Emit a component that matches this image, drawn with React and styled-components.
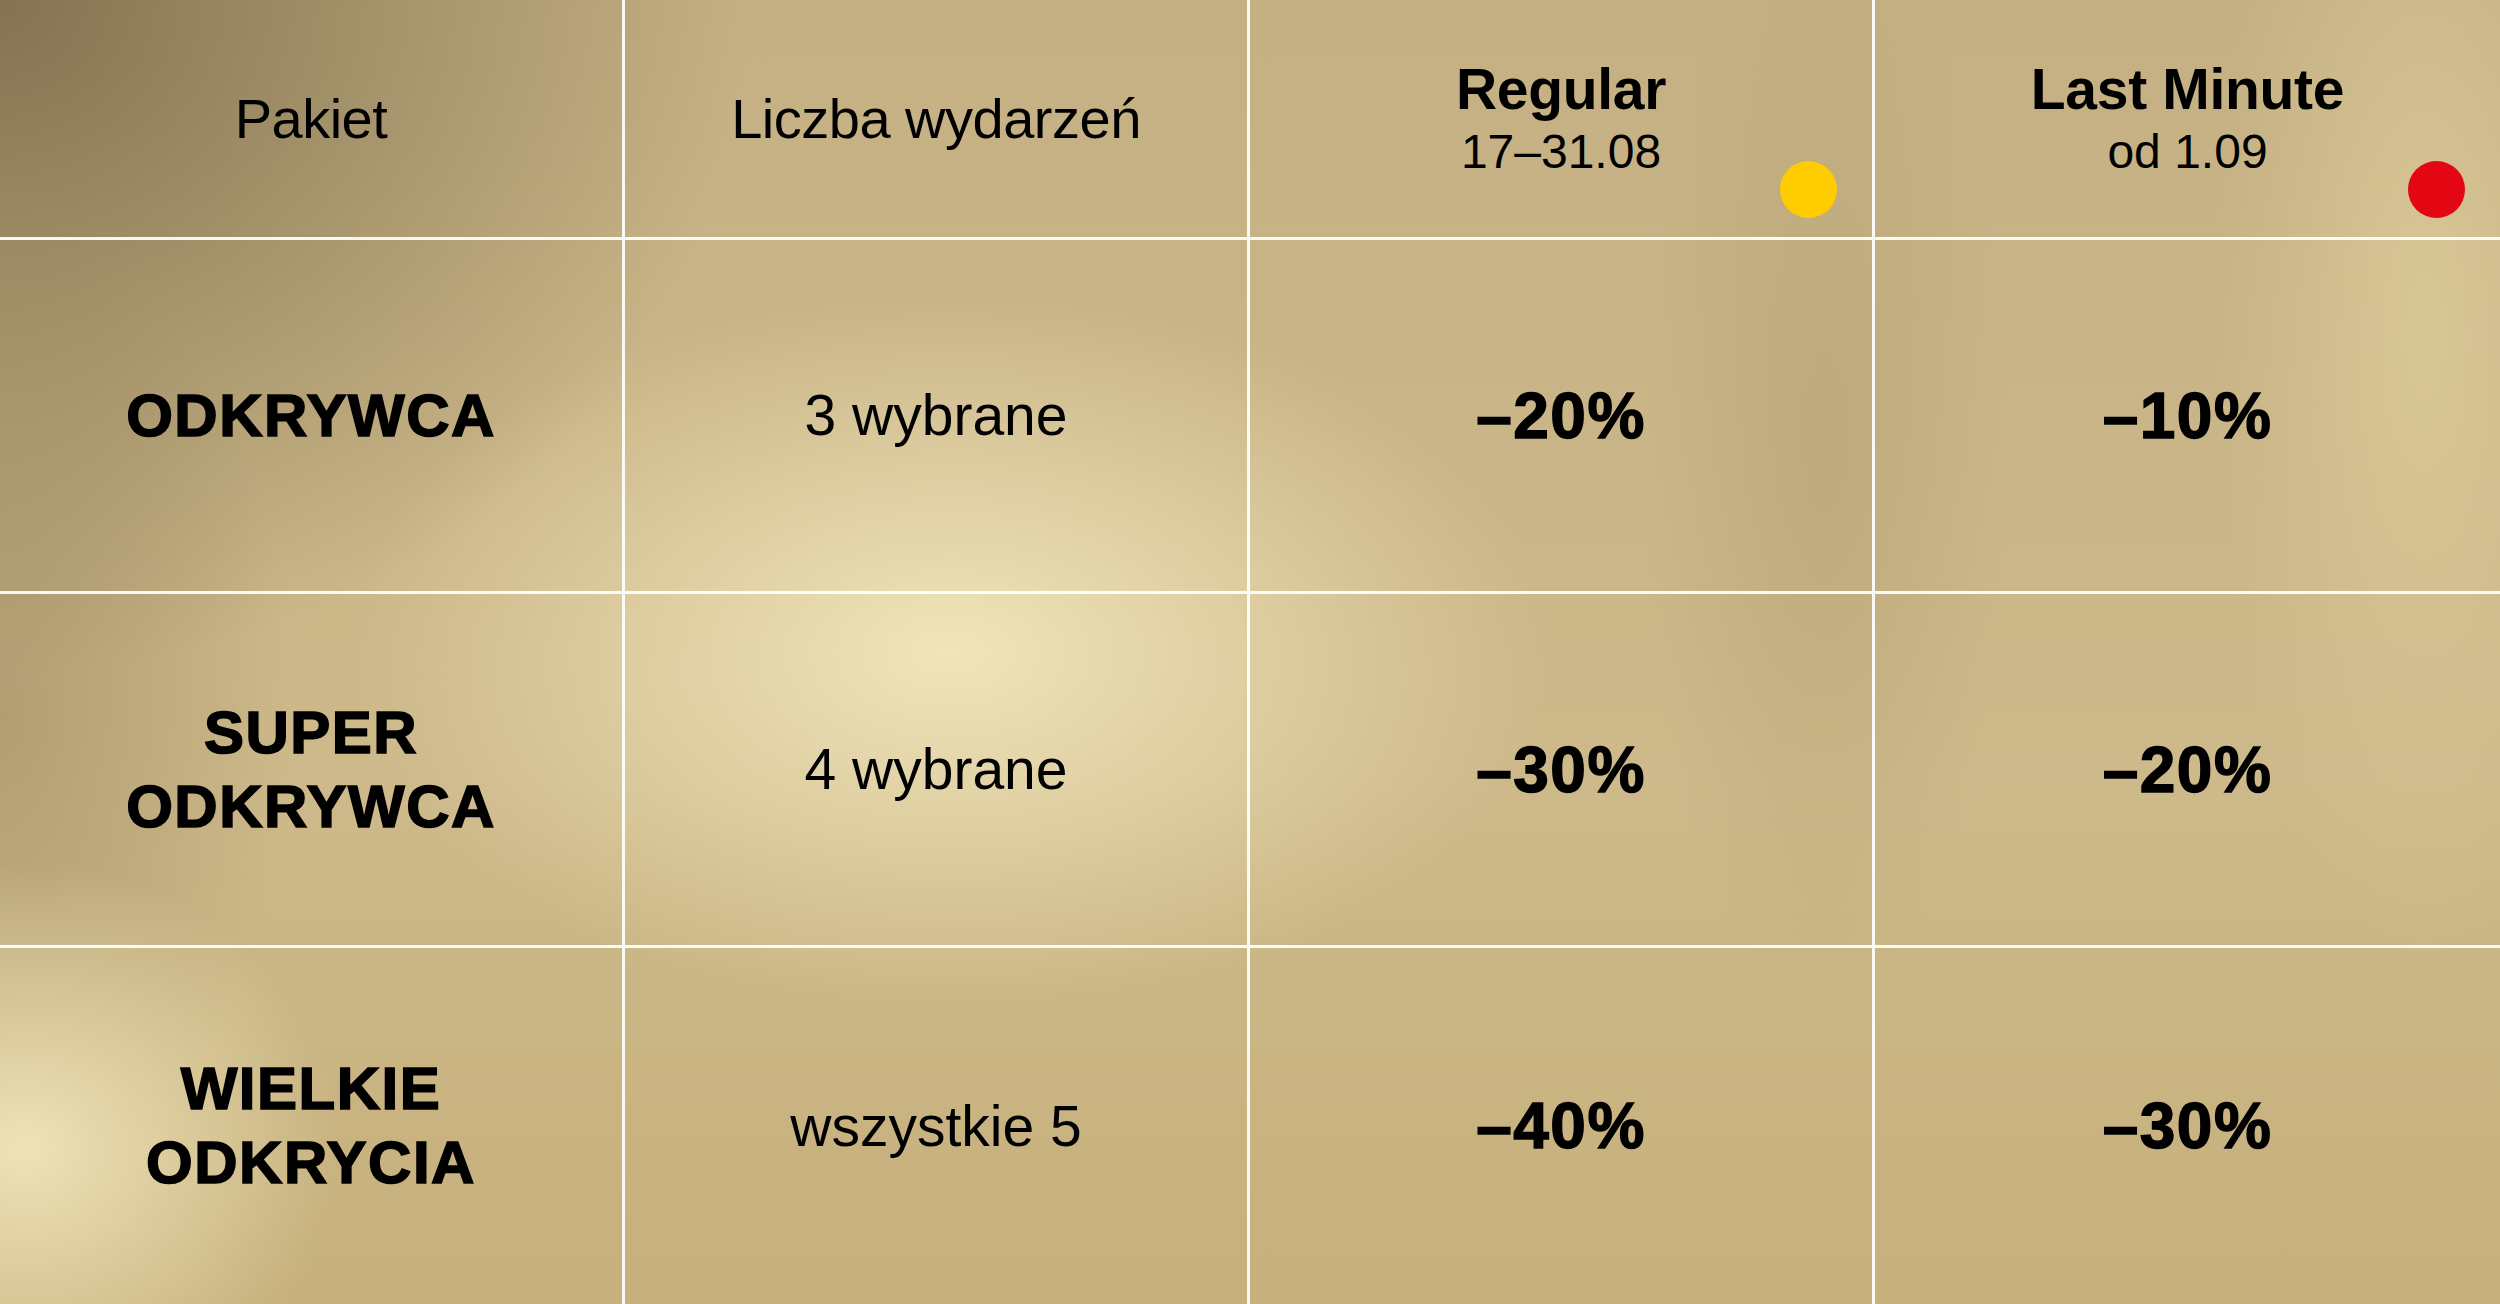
import React from 'react';
import styled, { createGlobalStyle } from 'styled-components';

const GlobalStyle = createGlobalStyle`
  html, body {
    margin: 0;
    padding: 0;
    width: 100%;
    height: 100%;
    overflow: hidden;
  }
  body {
    font-family: "Liberation Sans", Arial, "Helvetica Neue", sans-serif;
    color: #000;
  }
`;

// packages shown in the table
const packages = [
  { name: ['ODKRYWCA'], events: '3 wybrane', regular: '–20%', last: '–10%' },
  { name: ['SUPER', 'ODKRYWCA'], events: '4 wybrane', regular: '–30%', last: '–20%' },
  { name: ['WIELKIE', 'ODKRYCIA'], events: 'wszystkie 5', regular: '–40%', last: '–30%' },
];

const App = () => {
  return (
    <>
      <GlobalStyle />
      <Board>
        <Table>
          <HeadCell>
            <HeadLabel>Pakiet</HeadLabel>
          </HeadCell>
          <HeadCell>
            <HeadLabel>Liczba wydarzeń</HeadLabel>
          </HeadCell>
          <HeadCell>
            <HeadTitle>Regular</HeadTitle>
            <HeadSub>17–31.08</HeadSub>
            <Dot color="#ffcc00" />
          </HeadCell>
          <HeadCell last>
            <HeadTitle>Last Minute</HeadTitle>
            <HeadSub>od 1.09</HeadSub>
            <Dot color="#e30613" />
          </HeadCell>

          {packages.map((p, i) => {
            const bottom = i === packages.length - 1;
            return (
              <React.Fragment key={p.events}>
                <Cell bottom={bottom}>
                  <PackageName>
                    {p.name.map((line) => (
                      <span key={line}>{line}</span>
                    ))}
                  </PackageName>
                </Cell>
                <Cell bottom={bottom}>
                  <Events>{p.events}</Events>
                </Cell>
                <Cell bottom={bottom}>
                  <Discount>{p.regular}</Discount>
                </Cell>
                <Cell bottom={bottom} last>
                  <Discount>{p.last}</Discount>
                </Cell>
              </React.Fragment>
            );
          })}
        </Table>
      </Board>
    </>
  );
};

const Board = styled.main`
  width: 100vw;
  height: 100vh;
  background-color: #c6b282;
  background-image:
    radial-gradient(ellipse 1000px 900px at 0% 0%, rgba(128, 112, 78, 0.95), rgba(128, 112, 78, 0) 75%),
    radial-gradient(ellipse 420px 380px at 1% 88%, rgba(240, 229, 186, 0.95), rgba(240, 229, 186, 0) 75%),
    radial-gradient(ellipse 800px 480px at 38% 50%, rgba(242, 231, 189, 0.95), rgba(242, 231, 189, 0) 75%),
    radial-gradient(ellipse 300px 900px at 97% 25%, rgba(220, 203, 155, 0.8), rgba(220, 203, 155, 0) 70%),
    radial-gradient(ellipse 260px 800px at 73% 35%, rgba(178, 158, 112, 0.5), rgba(178, 158, 112, 0) 70%),
    radial-gradient(ellipse 420px 700px at 0% 55%, rgba(165, 146, 104, 0.7), rgba(165, 146, 104, 0) 70%),
    linear-gradient(180deg, #c4b083 0%, #cdb98a 60%, #c6b07c 100%);
`;

const Table = styled.div`
  display: grid;
  grid-template-columns: repeat(4, 1fr);
  grid-template-rows: 240px 354px 354px 1fr;
  height: 100%;
`;

const Cell = styled.div`
  box-sizing: border-box;
  display: flex;
  flex-direction: column;
  align-items: center;
  justify-content: center;
  text-align: center;
  border-right: ${(p) => (p.last ? 'none' : '3px solid rgba(255, 255, 255, 0.92)')};
  border-bottom: ${(p) => (p.bottom ? 'none' : '3px solid rgba(255, 255, 255, 0.92)')};
`;

const HeadCell = styled(Cell)`
  position: relative;
`;

const HeadLabel = styled.div`
  font-size: 56px;
  line-height: 1;
  letter-spacing: -0.5px;
`;

const HeadTitle = styled.div`
  font-size: 57px;
  font-weight: 700;
  line-height: 64px;
  letter-spacing: -0.3px;
`;

const HeadSub = styled.div`
  font-size: 48px;
  line-height: 58px;
  margin-top: 2px;
`;

const Dot = styled.span`
  position: absolute;
  right: 35px;
  bottom: 19px;
  width: 57px;
  height: 57px;
  border-radius: 50%;
  background: ${(p) => p.color};
`;

const PackageName = styled.div`
  display: flex;
  flex-direction: column;
  font-size: 60px;
  font-weight: 700;
  line-height: 74px;
  letter-spacing: 1.5px;
  -webkit-text-stroke: 1.6px #000;
`;

const Events = styled.div`
  font-size: 57px;
  line-height: 1;
`;

const Discount = styled.div`
  font-size: 64px;
  font-weight: 700;
  line-height: 1;
  letter-spacing: 1.5px;
  -webkit-text-stroke: 1.4px #000;
`;

export default App;
